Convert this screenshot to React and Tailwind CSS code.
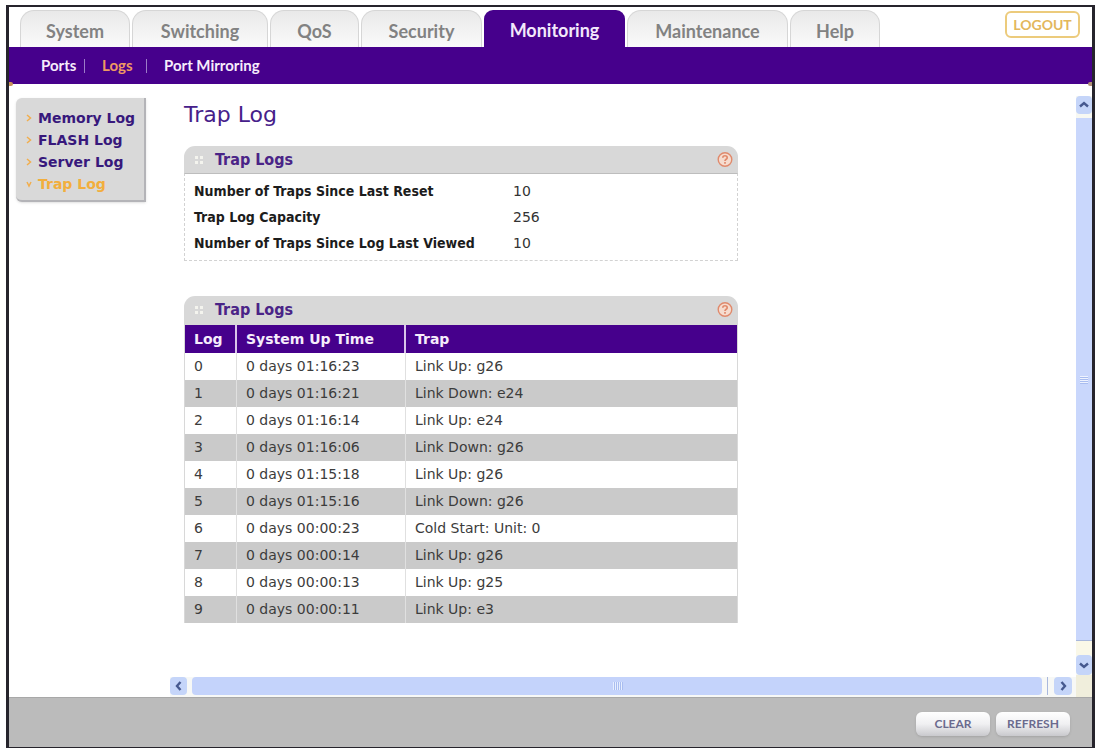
import React from "react";

const tabs = [
  { label: "System", width: "w-[110px]" },
  { label: "Switching", width: "w-[136px]" },
  { label: "QoS", width: "w-[89px]" },
  { label: "Security", width: "w-[121px]" },
  { label: "Monitoring", width: "w-[141px]", active: true },
  { label: "Maintenance", width: "w-[161px]" },
  { label: "Help", width: "w-[90px]" },
];

const sideLinks = [
  { label: "Memory Log" },
  { label: "FLASH Log" },
  { label: "Server Log" },
  { label: "Trap Log", active: true },
];

const stats = [
  ["Number of Traps Since Last Reset", "10"],
  ["Trap Log Capacity", "256"],
  ["Number of Traps Since Log Last Viewed", "10"],
];

const rows = [
  ["0", "0 days 01:16:23", "Link Up: g26"],
  ["1", "0 days 01:16:21", "Link Down: e24"],
  ["2", "0 days 01:16:14", "Link Up: e24"],
  ["3", "0 days 01:16:06", "Link Down: g26"],
  ["4", "0 days 01:15:18", "Link Up: g26"],
  ["5", "0 days 01:15:16", "Link Down: g26"],
  ["6", "0 days 00:00:23", "Cold Start: Unit: 0"],
  ["7", "0 days 00:00:14", "Link Up: g26"],
  ["8", "0 days 00:00:13", "Link Up: g25"],
  ["9", "0 days 00:00:11", "Link Up: e3"],
];

const arrowPaths = {
  up: "M2 7.5 L6 4 L10 7.5",
  down: "M2 4.5 L6 8 L10 4.5",
  left: "M7.5 2 L4 6 L7.5 10",
  right: "M4.5 2 L8 6 L4.5 10",
};

function ScrollButton({ direction, size }) {
  return (
    <button
      type="button"
      aria-label={`Scroll ${direction}`}
      className={`${size} flex shrink-0 items-center justify-center rounded-sm bg-[#c5d5f9]`}
    >
      <svg viewBox="0 0 12 12" className="h-3 w-3" fill="none" stroke="#46598f" strokeWidth="2.4">
        <path d={arrowPaths[direction]} />
      </svg>
    </button>
  );
}

function Tabs() {
  return (
    <header className="flex items-end justify-between pl-[11px] pr-3">
      <nav aria-label="Main" className="flex gap-[2px] pt-[3px]">
        {tabs.map((tab) => (
          <a
            key={tab.label}
            href="#"
            className={`${tab.width} flex h-[37px] items-center justify-center pt-1 text-[18px] font-bold ${
              tab.active
                ? "rounded-t-[9px] bg-[#46008c] text-[#f3e8fb]"
                : "rounded-t-[14px] border border-b-0 border-[#d6d6d6] bg-linear-to-b from-[#e9e9e9] to-[#fafafa] text-[#828282]"
            }`}
          >
            {tab.label}
          </a>
        ))}
      </nav>
      <button
        type="button"
        className="mb-[9px] h-[27px] w-[75px] rounded-md border-2 border-[#eccb7c] bg-white text-[14px] font-bold text-[#e3b75c]"
      >
        LOGOUT
      </button>
    </header>
  );
}

function SubNav() {
  return (
    <nav
      aria-label="Monitoring"
      className="relative flex h-[37px] items-center bg-[#46008c] pl-8 text-[15px] font-bold text-[#f6ecfb]"
    >
      <a href="#" className="w-[43px]">Ports</a>
      <span className="h-[14px] w-px bg-[#9c7cc8]" />
      <a href="#" className="w-[61px] pl-[17px] text-[#ee9a62]">Logs</a>
      <span className="h-[14px] w-px bg-[#9c7cc8]" />
      <a href="#" className="pl-[17px]">Port Mirroring</a>
      <span className="absolute -bottom-[2px] left-0 h-1 w-1 rounded-r-full bg-[#c8925a]" />
      <span className="absolute -bottom-[2px] right-0 h-1 w-1 rounded-l-full bg-[#b09078]" />
    </nav>
  );
}

function SideMenu() {
  return (
    <aside className="w-[161px] shrink-0 pl-[7px] pt-[14px]">
      <ul className="w-[130px] rounded-l-md border-b-2 border-r-2 border-[#b4b4b8] bg-[#d9d9d9] pb-[5px] pt-[9px] shadow-sm">
        {sideLinks.map((link) => (
          <li key={link.label}>
            <a
              href="#"
              className={`flex h-[22px] items-center gap-[6px] whitespace-nowrap pl-[10px] font-['DejaVu_Sans',sans-serif] text-[14px] font-bold ${
                link.active ? "text-[#f2ae3d]" : "text-[#37187c]"
              }`}
            >
              <svg viewBox="0 0 6 8" className="h-2 w-[6px] shrink-0" fill="none" stroke="#f2ae4d" strokeWidth="1.5">
                <path d={link.active ? "M1 2 L3 6 L5 2" : "M1 1 L4.5 4 L1 7"} />
              </svg>
              {link.label}
            </a>
          </li>
        ))}
      </ul>
    </aside>
  );
}

function PanelHeader({ title }) {
  return (
    <div className="flex h-[27px] items-center rounded-t-[11px] bg-[#d8d8d8] pl-[11px] pr-[5px]">
      <svg viewBox="0 0 8 8" className="mr-3 h-2 w-2" fill="#f4f4ee">
        <rect x="0" y="0" width="3" height="3" />
        <rect x="5" y="0" width="3" height="3" />
        <rect x="0" y="5" width="3" height="3" />
        <rect x="5" y="5" width="3" height="3" />
      </svg>
      <h2 className="flex-1 font-['DejaVu_Sans_Condensed','DejaVu_Sans',sans-serif] text-[16px] font-bold text-[#4a2487]">
        {title}
      </h2>
      <button type="button" aria-label={`Help for ${title}`}>
        <svg viewBox="0 0 16 16" className="h-4 w-4" fill="none" stroke="#e08a6c" strokeWidth="1.4">
          <circle cx="8" cy="7.5" r="6.8" fill="#f6dccf" />
          <path d="M5.8 5.7 C5.8 3.1 10.2 3.1 10.2 5.7 C10.2 7.3 8 7.3 8 9.1" strokeWidth="1.7" />
          <path d="M8 10.1 V11.7" strokeWidth="1.7" />
        </svg>
      </button>
    </div>
  );
}

function SummaryPanel() {
  return (
    <section className="max-w-[554px]">
      <PanelHeader title="Trap Logs" />
      <dl className="border border-dashed border-[#d2d2d2] border-t-[#bdbdbd] pb-1 pl-[9px] pt-1 [border-top-style:solid]">
        {stats.map(([label, value]) => (
          <div key={label} className="flex h-[26px] items-center">
            <dt className="w-[319px] whitespace-nowrap font-['DejaVu_Sans_Condensed','DejaVu_Sans',sans-serif] text-[14px] font-bold text-[#1c1c1c]">
              {label}
            </dt>
            <dd className="font-['DejaVu_Sans',sans-serif] text-[14px] text-[#333]">{value}</dd>
          </div>
        ))}
      </dl>
    </section>
  );
}

function LogPanel() {
  return (
    <section className="max-w-[554px]">
      <PanelHeader title="Trap Logs" />
      <table className="w-full table-fixed border-separate border-spacing-0 border-x border-t-2 border-[#d8d8d8] text-left font-['DejaVu_Sans',sans-serif] text-[14px]">
        <colgroup>
          <col className="w-[52px]" />
          <col className="w-[169px]" />
          <col />
        </colgroup>
        <thead>
          <tr className="h-7 bg-[#46008c] text-[#f6ecfb]">
            <th className="border-r-2 border-[#d9c4ea] pl-[9px] font-bold">Log</th>
            <th className="border-r-2 border-[#d9c4ea] pl-[9px] font-bold">System Up Time</th>
            <th className="pl-[9px] font-bold">Trap</th>
          </tr>
        </thead>
        <tbody>
          {rows.map((row) => (
            <tr key={row[0]} className="h-[27px] text-[#3c3c3c] odd:bg-white even:bg-[#cacaca]">
              <td className="border-r border-[#e0e0e0] pl-[9px]">{row[0]}</td>
              <td className="border-r border-[#e0e0e0] pl-[9px]">{row[1]}</td>
              <td className="pl-[9px]">{row[2]}</td>
            </tr>
          ))}
        </tbody>
      </table>
    </section>
  );
}

function HorizontalScroll() {
  return (
    <div className="flex h-5 items-start bg-[#f7f8f6] pr-1">
      <ScrollButton direction="left" size="h-[18px] w-[17px]" />
      <div className="mx-[5px] flex h-[18px] flex-1 items-center justify-center gap-px rounded-sm bg-[#c4d3fb]">
        {[0, 1, 2, 3, 4].map((n) => (
          <span key={n} className="h-2 w-px bg-[#e6eeff] shadow-[1px_0_0_#a9bdf0]" />
        ))}
      </div>
      <div className="mr-[6px] h-[18px] w-px bg-[#a9b8dd]" />
      <ScrollButton direction="right" size="h-[18px] w-[18px]" />
    </div>
  );
}

function VerticalScroll() {
  return (
    <div className="mt-3 flex w-4 shrink-0 flex-col bg-[#f7f8f2]">
      <ScrollButton direction="up" size="h-[18px] w-4" />
      <div className="mt-1 flex flex-1 flex-col items-center justify-center gap-px border-b border-[#a9b8dd] bg-[#c9d7fc]">
        {[0, 1, 2, 3].map((n) => (
          <span key={n} className="h-px w-2 bg-[#eef3ff] shadow-[0_1px_0_#a9bdf0]" />
        ))}
      </div>
      <div className="h-[14px] bg-[#faf8e8]" />
      <ScrollButton direction="down" size="h-5 w-4" />
      <div className="h-[22px] bg-[#f0eedc]" />
    </div>
  );
}

export default function App() {
  return (
    <div className="flex min-h-screen flex-col bg-white pl-[6px] pr-[3px] pt-[5px] font-[Lato,sans-serif]">
      <div className="flex flex-1 flex-col border-x-[3px] border-b border-t-2 border-[#26242c] bg-white">
        <Tabs />
        <SubNav />
        <div className="flex flex-1">
          <SideMenu />
          <main className="flex min-w-0 flex-1 flex-col">
            <div className="flex-1 pl-[14px] pr-4 pt-[15px]">
              <h1 className="font-['DejaVu_Sans',sans-serif] text-[22px] leading-8 text-[#46208a]">Trap Log</h1>
              <div className="mt-[15px] flex flex-col gap-[35px]">
                <SummaryPanel />
                <LogPanel />
              </div>
            </div>
            <HorizontalScroll />
          </main>
          <VerticalScroll />
        </div>
        <footer className="flex h-[50px] items-center justify-end gap-[6px] border-t border-[#a8a8a8] bg-[#bbbbbb] pr-[22px] pt-[2px]">
          {["CLEAR", "REFRESH"].map((label) => (
            <button
              key={label}
              type="button"
              className="h-6 w-[74px] rounded-md bg-linear-to-b from-white via-[#f0f0f2] to-[#c9c9cd] text-[12px] font-bold text-[#6b6b8e] shadow-sm"
            >
              {label}
            </button>
          ))}
        </footer>
      </div>
    </div>
  );
}
